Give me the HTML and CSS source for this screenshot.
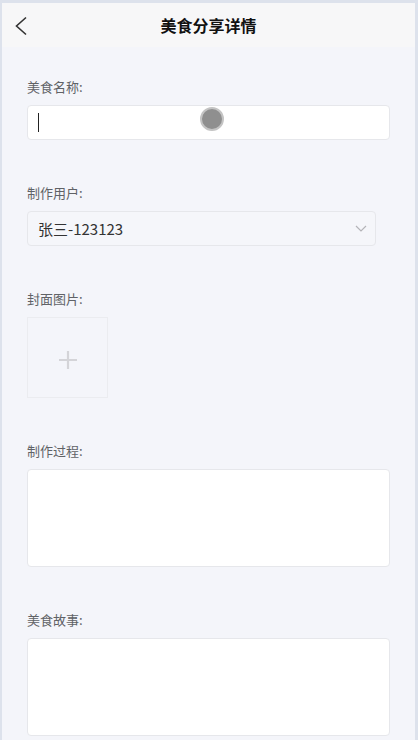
FILE: index.html
```html
<!DOCTYPE html>
<html lang="zh-CN">
<head>
    <meta charset="UTF-8">
    <meta name="viewport" content="width=device-width, initial-scale=1.0">
    <title>美食分享详情</title>
    <link rel="stylesheet" href="styles.css">
</head>
<body>
    <div class="frame">
        <div class="header">
            <span class="back">
                <svg width="14" height="20" viewBox="0 0 14 20"><path d="M12 1.5 L2.5 10 L12 18.5" fill="none" stroke="#333" stroke-width="1.6"/></svg>
            </span>
            <h1 class="title">美食分享详情</h1>
            <span></span>
        </div>

        <div class="form">
            <div class="form-item">
                <div class="label">美食名称:</div>
                <div class="field input">
                    <span class="caret"></span>
                    <span class="touch"></span>
                </div>
            </div>

            <div class="form-item">
                <div class="label">制作用户:</div>
                <div class="field select">
                    <span>张三-123123</span>
                    <svg width="12" height="7" viewBox="0 0 12 7"><path d="M1 1 L6 6 L11 1" fill="none" stroke="#b4b4b8" stroke-width="1.2"/></svg>
                </div>
            </div>

            <div class="form-item">
                <div class="label">封面图片:</div>
                <div class="upload">
                    <svg width="20" height="20" viewBox="0 0 20 20"><path d="M10 1 V19 M1 10 H19" stroke="#d4d4d8" stroke-width="2.2"/></svg>
                </div>
            </div>

            <div class="form-item">
                <div class="label">制作过程:</div>
                <div class="field textarea"></div>
            </div>

            <div class="form-item">
                <div class="label">美食故事:</div>
                <div class="field textarea"></div>
            </div>
        </div>
    </div>
</body>
</html>
```

FILE: styles.css
```css
body {
    margin: 0;
    font-family: "Noto Sans CJK SC", "Noto Sans", sans-serif;
    background-color: #f4f5fa;
}
.frame {
    height: 740px;
    box-sizing: border-box;
    border: 3px solid #dde2ec;
    border-left-width: 2px;
    border-bottom: none;
    background-color: #f4f5fa;
    overflow: hidden;
}
.header {
    height: 44px;
    display: grid;
    grid-template-columns: 44px 1fr 44px;
    align-items: center;
    background-color: #f7f7f8;
}
.back {
    display: flex;
    padding-left: 12px;
    padding-top: 1px;
}
.title {
    margin: 0;
    text-align: center;
    font-size: 16px;
    font-weight: bold;
    color: #111;
}
.form {
    padding: 29px 25px 0 25px;
}
.form-item {
    margin-bottom: 42px;
}
.form-item.upload-item {
    margin-bottom: 43px;
}
.label {
    font-size: 13px;
    line-height: 22px;
    color: #606266;
    margin-bottom: 7px;
}
.field {
    box-sizing: border-box;
    border: 1px solid #e6e7eb;
    border-radius: 4px;
    background-color: #fff;
}
.input {
    height: 35px;
    position: relative;
    display: flex;
    align-items: center;
    padding-left: 10px;
}
.caret {
    width: 1px;
    height: 19px;
    background-color: #222;
}
.touch {
    position: absolute;
    left: 172px;
    top: 1px;
    width: 20px;
    height: 20px;
    border-radius: 50%;
    background-color: #8f8f8f;
    border: 2px solid #c4c4c4;
}
.select {
    width: 349px;
    height: 35px;
    display: flex;
    align-items: center;
    justify-content: space-between;
    padding: 0 8px 0 10px;
    background-color: #f5f6fa;
    font-size: 15px;
    color: #333;
}
.upload {
    width: 81px;
    height: 81px;
    box-sizing: border-box;
    border: 1px solid #ebecf0;
    display: flex;
    align-items: center;
    justify-content: center;
    padding-top: 4px;
}
.textarea {
    height: 98px;
}
```
